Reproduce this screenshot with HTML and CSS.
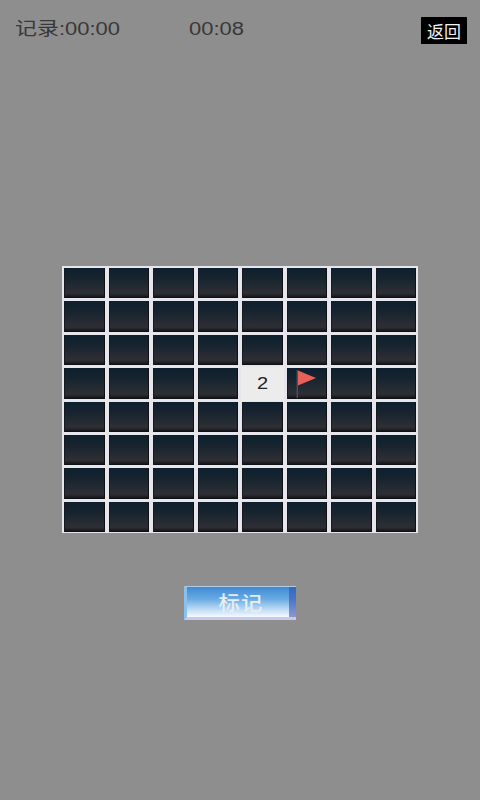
FILE: index.html
```html
<!DOCTYPE html>
<html lang="zh">
<head>
<meta charset="utf-8">
<title>扫雷</title>
<link rel="stylesheet" href="styles.css">
</head>
<body>
<div class="screen">
  <header class="topbar">
    <span class="time record">记录:00:00</span>
    <span class="time current">00:08</span>
    <button class="back">返回</button>
  </header>
  <main class="board">
    <div class="cell"></div><div class="cell"></div><div class="cell"></div><div class="cell"></div><div class="cell"></div><div class="cell"></div><div class="cell"></div><div class="cell"></div>
    <div class="cell"></div><div class="cell"></div><div class="cell"></div><div class="cell"></div><div class="cell"></div><div class="cell"></div><div class="cell"></div><div class="cell"></div>
    <div class="cell"></div><div class="cell"></div><div class="cell"></div><div class="cell"></div><div class="cell"></div><div class="cell"></div><div class="cell"></div><div class="cell"></div>
    <div class="cell"></div><div class="cell"></div><div class="cell"></div><div class="cell"></div>
    <div class="cell open"><span class="num">2</span></div>
    <div class="cell flagged"><svg class="flag" viewBox="0 0 22 30" width="22" height="30"><rect x="0.6" y="1" width="1.4" height="28" fill="#4d5258"/><path d="M2 1.5 L20 9 L2 16.5 Z" fill="#e9605a"/></svg></div>
    <div class="cell"></div><div class="cell"></div>
    <div class="cell"></div><div class="cell"></div><div class="cell"></div><div class="cell"></div><div class="cell"></div><div class="cell"></div><div class="cell"></div><div class="cell"></div>
    <div class="cell"></div><div class="cell"></div><div class="cell"></div><div class="cell"></div><div class="cell"></div><div class="cell"></div><div class="cell"></div><div class="cell"></div>
    <div class="cell"></div><div class="cell"></div><div class="cell"></div><div class="cell"></div><div class="cell"></div><div class="cell"></div><div class="cell"></div><div class="cell"></div>
    <div class="cell"></div><div class="cell"></div><div class="cell"></div><div class="cell"></div><div class="cell"></div><div class="cell"></div><div class="cell"></div><div class="cell"></div>
  </main>
  <button class="mark"><span class="mark-label">标记</span></button>
</div>
</body>
</html>
```
FILE: styles.css
```css
* { box-sizing: border-box; }
html, body { margin: 0; padding: 0; }
body {
  width: 480px;
  height: 800px;
  overflow: hidden;
  background: #8e8e8e;
  font-family: "Liberation Sans", "Noto Sans CJK SC", sans-serif;
}
.screen {
  display: flex;
  flex-direction: column;
  align-items: center;
  height: 800px;
}
.topbar {
  width: 100%;
  height: 44px;
  padding: 17px 13px 0 15px;
  display: flex;
  align-items: flex-start;
}
.time {
  color: #383838;
  font-size: 18px;
  line-height: 24px;
  transform: scaleX(1.22);
  transform-origin: left center;
  white-space: nowrap;
}
.record { width: 174px; }
.current { flex: 1; }
.back {
  width: 46px;
  height: 27px;
  padding: 0;
  border: 0;
  background: #000;
  color: #f2f2f2;
  font-family: "Noto Sans CJK SC", sans-serif;
  font-size: 17px;
  line-height: 27px;
}
.board {
  margin-top: 222px;
  width: 356px;
  height: 267px;
  padding: 2px 2px 1px;
  display: grid;
  grid-template-columns: repeat(8, 1fr);
  grid-template-rows: repeat(8, 1fr);
  gap: 3px 4px;
  background: #e6e6ec;
}
.cell {
  background: linear-gradient(#0d1f2e 0%, #17242f 35%, #2e2f34 84%, #222327 91%, #0b0c0f 100%);
  border-left: 1px solid #16191f;
  border-right: 1px solid #0f1014;
  display: flex;
  align-items: center;
  justify-content: center;
  min-width: 0;
  min-height: 0;
}
.cell.open {
  background: #ececec;
  border: 0;
  margin: -1px -1px -2px -1px;
}
.num {
  color: #222;
  font-size: 16px;
  transform: scaleX(1.25);
}
.cell.flagged {
  justify-content: flex-start;
  align-items: flex-start;
  overflow: hidden;
  padding-left: 8px;
  padding-top: 1px;
}
.mark {
  margin-top: 53px;
  width: 112px;
  height: 34px;
  padding: 0;
  border-style: solid;
  border-width: 1px 0 3px 3px;
  border-color: #b4cbe2 transparent #c9c9ee #8cc0ec;
  background:
    linear-gradient(to right, transparent 94%, rgba(50, 70, 170, .55) 94%),
    linear-gradient(#3d8ad6 0%, #6aaae3 40%, #c0def5 76%, #f6fafd 100%);
  color: #e6eef5;
  font-family: "Noto Sans CJK SC", sans-serif;
  font-size: 19px;
  font-weight: 500;
  line-height: 28px;
}
.mark-label {
  display: inline-block;
  letter-spacing: 1px;
  transform: scaleX(1.12);
}
```
